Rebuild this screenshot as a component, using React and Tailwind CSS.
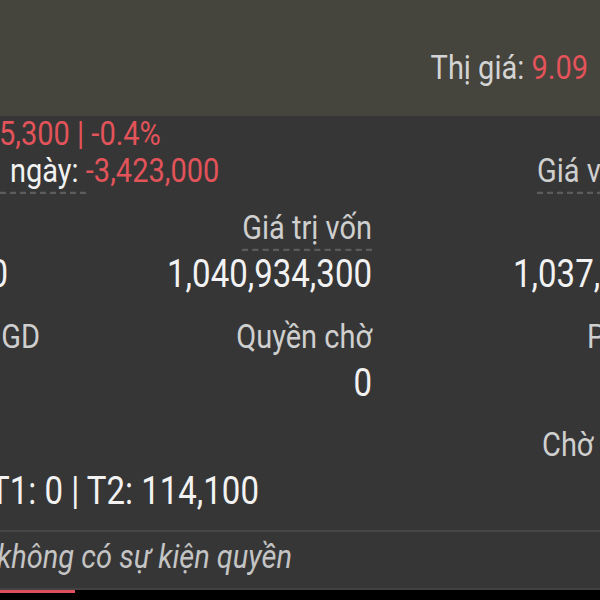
import React from "react";

const Dash = ({ children, className = "" }) => (
  <span className={"border-b-2 border-dashed border-[#5c5c5c] pb-[1px] " + className}>{children}</span>
);

export default function App() {
  return (
    <div className="w-[600px] h-[600px] overflow-hidden bg-[#363636] flex flex-col font-['Roboto',sans-serif] whitespace-nowrap">
      {/* header band */}
      <div className="h-[116px] shrink-0 bg-[#45443d] flex justify-end pr-[12px] pt-[50px]">
        <div className="h-[34px] text-[29px] leading-[34px] text-[#d4d4d4] scale-y-[1.15]">
          Thị giá: <span className="text-[#e2535a]">9.09</span>
        </div>
      </div>

      {/* change */}
      <div className="mt-[1px] h-[34px] shrink-0 text-[29px] leading-[34px] text-[#e2535a] -ml-[1px] scale-y-[1.15]">
        5,300 | -0.4%
      </div>

      {/* daily P/L row */}
      <div className="mt-[3px] h-[34px] shrink-0 flex text-[29px] leading-[34px] scale-y-[1.15]">
        <div className="w-[537px] shrink-0 text-[#f2f2f2]">
          <Dash className="pl-[10px]">{"ngày:\u00a0"}</Dash>
          <span className="text-[#e2535a]">-3,423,000</span>
        </div>
        <div className="shrink-0 text-[#cfcfcf]">
          <Dash>Giá vốn</Dash>
        </div>
      </div>

      {/* labels row A */}
      <div className="mt-[23px] h-[34px] shrink-0 flex text-[29px] leading-[34px] text-[#cfcfcf] scale-y-[1.15]">
        <div className="w-[372px] shrink-0 text-right">
          <Dash>Giá trị vốn</Dash>
        </div>
      </div>

      {/* values row A */}
      <div className="mt-[9px] h-[39px] shrink-0 flex text-[33px] leading-[39px] text-[#f2f2f2] scale-y-[1.15]">
        <div className="w-[8px] shrink-0 flex justify-end">0</div>
        <div className="w-[364px] shrink-0 text-right">1,040,934,300</div>
        <div className="pl-[141px] shrink-0">1,037,</div>
      </div>

      {/* labels row B */}
      <div className="mt-[26px] h-[34px] shrink-0 flex text-[29px] leading-[34px] text-[#cfcfcf] scale-y-[1.15]">
        <div className="w-[40px] shrink-0 flex justify-end">GD</div>
        <div className="w-[332px] shrink-0 text-right">Quyền chờ</div>
        <div className="pl-[215px] shrink-0">P</div>
      </div>

      {/* values row B */}
      <div className="mt-[10px] h-[39px] shrink-0 flex text-[33px] leading-[39px] text-[#f2f2f2] scale-y-[1.15]">
        <div className="w-[372px] shrink-0 text-right">0</div>
      </div>

      {/* labels row C */}
      <div className="mt-[25px] h-[34px] shrink-0 flex text-[29px] leading-[34px] text-[#cfcfcf] scale-y-[1.15]">
        <div className="pl-[542px] shrink-0">Chờ</div>
      </div>

      {/* values row C */}
      <div className="mt-[10px] h-[39px] shrink-0 text-[33px] leading-[39px] text-[#f2f2f2] -ml-[10px] scale-y-[1.15]">
        T1: 0 | T2: 114,100
      </div>

      {/* divider */}
      <div className="mt-[20px] h-[2px] bg-[#474747] shrink-0" />

      {/* no events */}
      <div className="mt-[7px] h-[34px] shrink-0 text-[29px] leading-[34px] italic text-[#c4c4c4] -ml-[3px] scale-y-[1.15]">
        không có sự kiện quyền
      </div>

      <div className="mt-[15px] h-[2px] bg-[#424242] shrink-0" />
      <div className="flex-1 bg-black">
        <div className="w-[75px] h-[3px] bg-[#e0505a]" />
      </div>
    </div>
  );
}
